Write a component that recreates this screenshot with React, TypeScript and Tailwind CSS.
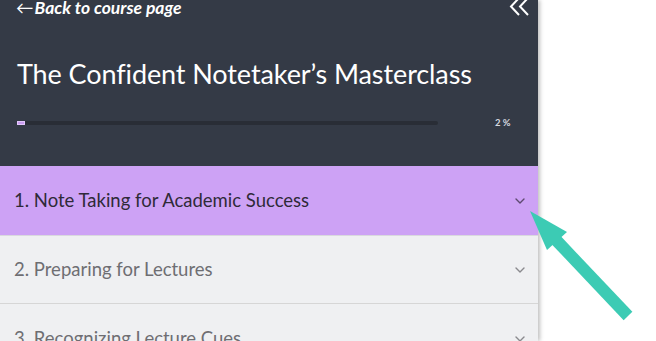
import React from "react";

function Chevron({ className }: { className?: string }) {
  return (
    <svg width="10" height="6" viewBox="0 0 10 6" className={className} fill="none">
      <path d="M1 1l4 4 4-4" stroke="currentColor" strokeWidth="1.4" strokeLinecap="round" strokeLinejoin="round" />
    </svg>
  );
}

export default function App() {
  return (
    <div className="relative w-[656px] h-[341px] overflow-hidden bg-white" style={{ fontFamily: "Lato, 'Noto Sans', sans-serif" }}>
      <div className="w-[538px] h-full flex flex-col shadow-[2px_0_4px_rgba(0,0,0,0.25)] relative z-10">
        <div className="bg-[#343a46] h-[166px] shrink-0 flex flex-col px-[17px]">
          <div className="flex items-center justify-between h-[18px] -mt-[1px]">
            <div className="text-[17.5px] font-bold italic text-white leading-none -ml-[1px] flex items-center">
              <span className="font-normal not-italic mr-[1px]">←</span>Back to course page
            </div>
            <svg width="22" height="20" viewBox="0 0 22 20" fill="none" className="-mr-[10px] -mt-[2px]">
              <path d="M10 1L2 9.5 10 18M19 1L11 9.5 19 18" stroke="white" strokeWidth="2" />
            </svg>
          </div>
          <div className="mt-[42px] text-[27px] text-white leading-[30px] tracking-[-0.1px]">The Confident Notetaker’s Masterclass</div>
          <div className="mt-[27px] flex items-center">
            <div className="w-[421px] h-[4px] bg-[#292d36] rounded-full">
              <div className="w-[8px] h-[4px] bg-[#c99cf0] border border-[#e2c6fb]" />
            </div>
            <div className="ml-[57px] text-[9.5px] font-bold text-[#d8dae0]">2 %</div>
          </div>
        </div>
        <div className="h-[70px] shrink-0 bg-[#cda2f5] flex items-center justify-between pl-[14px] pr-[13px] border-b border-[#d9d9de]">
          <span className="text-[18.5px] text-[#2f2a38]">1. Note Taking for Academic Success</span>
          <Chevron className="text-[#5e4a70]" />
        </div>
        <div className="h-[68px] shrink-0 bg-[#eff0f2] flex items-center justify-between pl-[14px] pr-[13px] border-b border-[#d6d6d6]">
          <span className="text-[18.5px] text-[#6e6e72]">2. Preparing for Lectures</span>
          <Chevron className="text-[#8a8a8e]" />
        </div>
        <div className="h-[70px] shrink-0 bg-[#eff0f2] flex items-center justify-between pl-[14px] pr-[13px]">
          <span className="text-[18.5px] text-[#6e6e72]">3. Recognizing Lecture Cues</span>
          <Chevron className="text-[#8a8a8e]" />
        </div>
      </div>
      <svg className="absolute left-0 top-0 z-20" width="656" height="341" viewBox="0 0 656 341">
        <polygon points="530,211 567,232 547,250" fill="#3ccbb4" />
        <line x1="556" y1="240" x2="628" y2="316" stroke="#3ccbb4" strokeWidth="12" />
      </svg>
    </div>
  );
}
